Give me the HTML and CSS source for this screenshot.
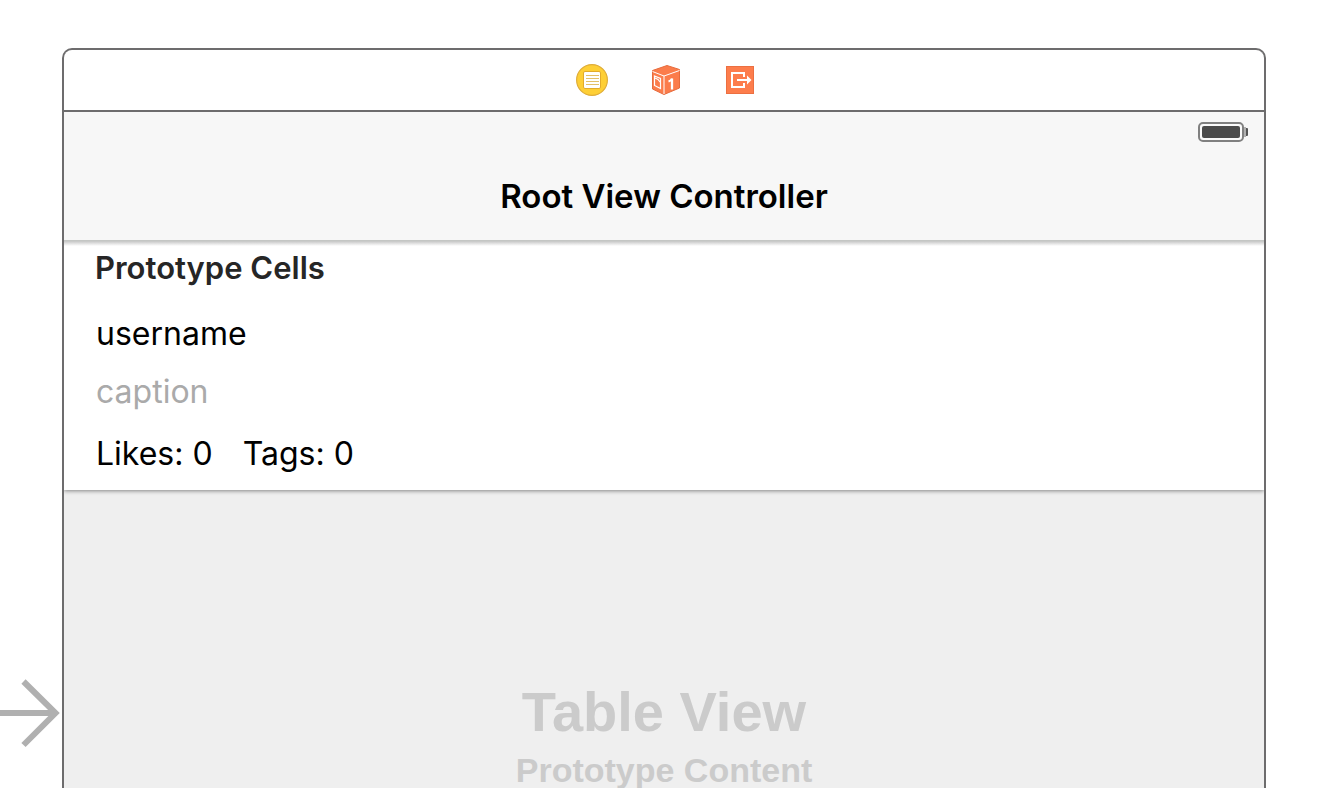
FILE: index.html
```
<!DOCTYPE html>
<html lang="en">
<head>
<meta charset="utf-8">
<title>Root View Controller</title>
<link rel="stylesheet" href="styles.css">
</head>
<body>
<div class="canvas">
  <div class="gutter">
    <svg class="entry-arrow" width="62" height="70" viewBox="0 0 62 70" fill="none" stroke="#b0b0b0" stroke-width="6" aria-hidden="true">
      <path d="M0 35H55M23.500 3.500L55.500 35L23.500 67"/>
    </svg>
  </div>
  <main class="scene">
    <header class="dock">
      <svg width="32" height="32" viewBox="0 0 32 32" aria-hidden="true">
        <circle cx="16" cy="16" r="15.400" fill="#fecf35" stroke="#dfad3a" stroke-width="1.200"/>
        <rect x="7.500" y="7.500" width="17" height="17" rx="1.500" fill="#fff" stroke="#e2ab2c"/>
        <path d="M10 11.500H23M10 14.500H23M10 17.500H23M10 20.500H23" stroke="#e3c06a" stroke-width="1"/>
      </svg>
      <svg width="32" height="32" viewBox="0 0 32 32" aria-hidden="true">
        <path d="M17 1.500L29.500 5.500V24L14 30.500L2.500 25V6.500Z" fill="#fb7c4b" stroke="#e66b3d" stroke-width="1"/>
        <path d="M2.500 7.500L14 12L29.500 6.500M14 12V30" fill="none" stroke="#fff" stroke-width="1"/>
        <path d="M4.500 12L10.500 14.500V24.500L4.500 21.500ZM5 14L8 15.500L10 18" fill="none" stroke="#fff" stroke-width="1.200"/>
        <path d="M18.500 17.500C20.500 17 21.500 16 22 14.500V25.500" fill="none" stroke="#fff" stroke-width="2.300"/>
      </svg>
      <svg width="32" height="32" viewBox="0 0 32 32" aria-hidden="true">
        <rect x="2.500" y="2.500" width="27" height="27" fill="#fd7d4c" stroke="#ec6f41"/>
        <path d="M20 13V9H8V23H20V19" fill="none" stroke="#fff" stroke-width="2"/>
        <path d="M13 16H24" fill="none" stroke="#fff" stroke-width="2"/>
        <path d="M23 11.500L27.500 16L23 20.500Z" fill="#fff"/>
      </svg>
    </header>
    <div class="navigation">
      <div class="status">
        <svg width="50" height="20" viewBox="0 0 50 20" aria-label="Battery full">
          <rect x="1" y="1" width="44" height="18" rx="4" fill="#fafafa" stroke="#808080" stroke-width="2"/>
          <rect x="4" y="4" width="38" height="12" rx="2" fill="#4b4b4b"/>
          <path d="M46 5H48V15H46Z" fill="#b0b0b0"/>
          <path d="M48 6H49Q50 6 50 7V13Q50 14 49 14H48Z" fill="#555"/>
        </svg>
      </div>
      <h1 class="title">Root View Controller</h1>
    </div>
    <section class="cells">
      <h2 class="section-title">Prototype Cells</h2>
      <p class="username">username</p>
      <p class="caption">caption</p>
      <p class="counts"><span>Likes: 0</span><span>Tags: 0</span></p>
    </section>
    <section class="placeholder">
      <p class="placeholder-title">Table View</p>
      <p class="placeholder-subtitle">Prototype Content</p>
    </section>
  </main>
</div>
</body>
</html>
```
FILE: styles.css
```
* {
  box-sizing: border-box;
}

body {
  margin: 0;
  background: #fff;
  color: #000;
  font-family: Inter, "Liberation Sans", sans-serif;
}

h1, h2, p {
  margin: 0;
}

svg {
  display: block;
}

.canvas {
  display: flex;
  height: 100vh;
  overflow: hidden;
  padding: 48px 60px 0 0;
}

.gutter {
  flex: none;
  width: 62px;
  padding-top: 630px;
}

.scene {
  flex: 1;
  display: flex;
  flex-direction: column;
  overflow: hidden;
  border: 2px solid #6d6c6d;
  border-bottom: 0;
  border-radius: 10px 10px 0 0;
}

.dock {
  flex: none;
  display: flex;
  justify-content: center;
  gap: 42px;
  padding: 14px 0 14px 4px;
  border-bottom: 2px solid #6d6c6d;
}

.navigation {
  flex: none;
  background: #f7f7f7;
}

.status {
  display: flex;
  justify-content: flex-end;
  padding: 10px 16px;
}

.title {
  padding: 24px 0;
  font-size: 33px;
  line-height: 40px;
  font-weight: 600;
  text-align: center;
}

.cells {
  position: relative;
  flex: none;
  padding: 8px 31px 16px;
  background: #fff;
  box-shadow: 0 1px 4px rgba(0, 0, 0, 0.45);
  clip-path: inset(0 0 -8px);
  font-size: 32px;
  line-height: 40px;
}

.cells::before {
  content: "";
  position: absolute;
  inset: 0 0 auto;
  height: 6px;
  background: linear-gradient(#c4c6c4 0 1px, #d0d0d0 2px, #fff);
}

.section-title {
  color: #262626;
  font-size: 31px;
  font-weight: 600;
  line-height: 40px;
}

.username {
  padding-top: 26px;
}

.caption {
  padding-top: 18px;
  color: #aaa;
}

.counts {
  display: flex;
  gap: 30px;
  padding-top: 22px;
}

.username,
.caption,
.counts {
  padding-left: 1px;
}

.placeholder {
  flex: 1;
  padding-top: 190px;
  background: #efefef;
  color: #cbcbcb;
  font-family: "Liberation Sans", Arial, sans-serif;
  font-weight: 700;
  text-align: center;
}

.placeholder-title {
  font-size: 56px;
  line-height: 64px;
}

.placeholder-subtitle {
  font-size: 34px;
  line-height: 52px;
}
```
